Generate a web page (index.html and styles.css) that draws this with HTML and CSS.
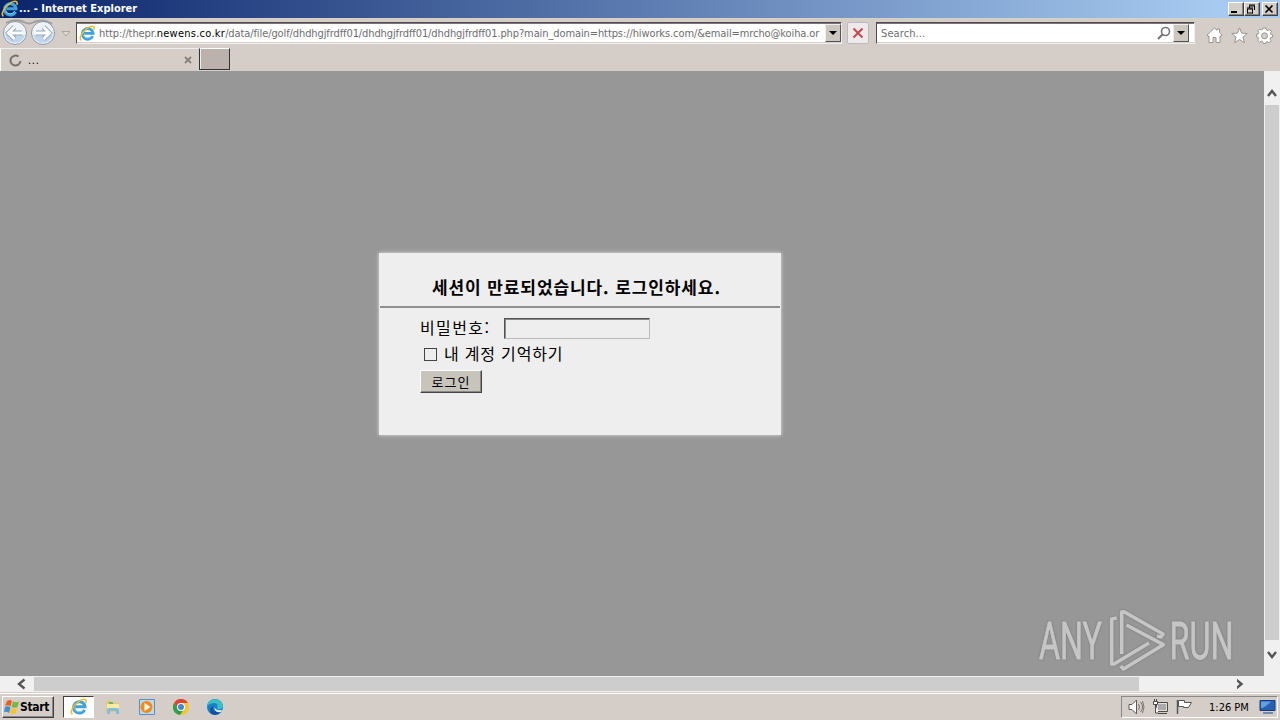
FILE: index.html
```
<!doctype html>
<html lang="ko">
<head>
	<meta charset="utf-8">
	<title>... - Internet Explorer</title>
	<link rel="stylesheet" href="styles.css">
</head>
<body>
	<!-- shared icon -->
	<svg class="defs" width="0" height="0">
		<symbol id="ie" viewBox="0 0 18 18">
			<path d="M14.5 11.8A5.7 5.7 0 1 1 15 8.8H5.5" fill="none" stroke="#3fa0dc" stroke-width="3"/>
			<path d="M13.8 10.9A5 5 0 0 1 4.5 10.5" fill="none" stroke="#7fd0f2" stroke-width="1"/>
			<path d="M2.4 16.2C-.5 14.5 3.1 7.5 8.2 3.8C12.8.4 17.4.2 15.8 4.8" fill="none" stroke="#e9bd2e" stroke-width="1.6"/>
		</symbol>
	</svg>

	<div class="titlebar">
		<svg class="title-icon" width="18" height="18"><use href="#ie"/></svg>
		<span class="title-text">... - Internet Explorer</span>
		<div class="winbtns">
			<button class="winbtn"><svg width="12" height="10"><path d="M2 8h6" stroke="#000" stroke-width="2"/></svg></button>
			<button class="winbtn"><svg width="12" height="10"><path d="M4 1h6M4 2h6M9.5 2v4M4.5 2v2M2 4h6M2 5h6M7.5 5v4.5M2.5 5v4.5M2 9h6" fill="none" stroke="#000"/></svg></button>
			<button class="winbtn close"><svg width="12" height="10"><path d="M2.5 1.5l7 7M9.500 1.500l-7 7" stroke="#000" stroke-width="1.700"/></svg></button>
		</div>
	</div>

	<div class="toolbar">
		<svg class="nav" width="74" height="30" viewBox="0 0 74 30">
			<path d="M6 5Q15 0 24 4Q29 7 34 4Q44 0 52 6" fill="none" stroke="#a19da1" stroke-width="2"/>
			<circle cx="15" cy="15" r="11.500" fill="#edf3f9" stroke="#8d97a8"/>
			<circle cx="43" cy="15" r="11.500" fill="#edf3f9" stroke="#8d97a8"/>
			<path d="M5 17a10.300 10.300 0 0 0 20 0zM33 17a10.300 10.300 0 0 0 20 0z" fill="#bfd6ea"/>
			<path d="M22 15H9M14.500 9l-6 6l6 6M36 15h13M43.500 9l6 6l-6 6" fill="none" stroke="#93a9c0" stroke-width="5"/>
			<path d="M22 15H9M14.500 9l-6 6l6 6M36 15h13M43.500 9l6 6l-6 6" fill="none" stroke="#fff" stroke-width="3"/>
			<path d="M62 13.500h8l-4 4.500z" fill="#ddd8d4" stroke="#aaa5a2"/>
		</svg>
		<div class="field address">
			<svg width="17" height="17"><use href="#ie"/></svg>
			<span class="url">http://thepr.<b>newens.co.kr</b>/data/file/golf/dhdhgjfrdff01/dhdhgjfrdff01/dhdhgjfrdff01.php?main_domain=https://hiworks.com/&amp;email=mrcho@koiha.or</span>
			<button class="drop"><svg width="8" height="4"><path d="M0 0h8l-4 4z"/></svg></button>
		</div>
		<button class="stop"><svg width="12" height="12"><path d="M1.500 1.500l9 9M10.500 1.500l-9 9" stroke="#c74850" stroke-width="2"/></svg></button>
		<div class="field search">
			<span class="search-text">Search...</span>
			<svg class="lens" width="14" height="14"><circle cx="8.500" cy="5.500" r="4" fill="none" stroke="#77747a" stroke-width="1.600"/><path d="M5.500 8.500L1 13" stroke="#77747a" stroke-width="2.200"/></svg>
			<button class="drop"><svg width="8" height="4"><path d="M0 0h8l-4 4z"/></svg></button>
		</div>
		<div class="tools">
			<svg width="17" height="17" viewBox="0 0 17 17"><path d="M1 8L8.500 1L11 3.300V2h2.500v3.500L16 8l-1 1.500l-1-.7V15.500h-4v-5H7v5H3V8.800l-1 .7z" fill="#fff" stroke="#99948f"/></svg>
			<svg width="17" height="17" viewBox="0 0 17 17"><path d="M8.500.8l2.100 5.300l5.700.4l-4.400 3.600l1.500 5.600l-4.900-3.100l-4.900 3.100l1.500-5.600L.7 6.500l5.700-.4z" fill="#fff" stroke="#99948f"/></svg>
			<svg width="17" height="17" viewBox="0 0 17 17"><path d="M7 1h3l.4 2l1.500.6l1.700-1.100l2 2L14.500 6.200l.6 1.300l1.400.3v2.400l-1.800.4l-.6 1.500l1 1.700l-2 2l-1.700-1.100l-1.300.5L9.800 16.500H7.200l-.5-1.800l-1.400-.5l-1.700 1l-1.900-1.900l1-1.700L2.100 10.200L.5 9.800V7.300l1.700-.4l.6-1.400l-1-1.600l1.900-1.900l1.600 1l1.400-.6z" fill="#fff" stroke="#99948f"/><circle cx="8.500" cy="8.800" r="3" fill="#d5cec8" stroke="#99948f"/></svg>
		</div>
	</div>

	<div class="tabs">
		<div class="tab">
			<svg width="13" height="13"><path d="M9.500 2.500A5 5 0 1 0 11.500 7" fill="none" stroke="#77716e" stroke-width="2"/></svg>
			<span class="tab-text">...</span>
			<svg width="8" height="8"><path d="M1 1l6 6M7 1L1 7" stroke="#85807c" stroke-width="1.800"/></svg>
		</div>
		<div class="newtab"></div>
	</div>

	<div class="view">
		<div class="page">
			<form class="login">
				<h3>세션이 만료되었습니다. 로그인하세요.</h3>
				<div class="fields">
					<div class="row">
						<label for="password" class="pw-label">비밀번호:</label>
						<input type="password" id="password" class="password">
					</div>
					<div class="row remember">
						<input type="checkbox" id="remember" class="check">
						<label for="remember">내 계정 기억하기</label>
					</div>
					<button type="button" class="submit">로그인</button>
				</div>
			</form>
			<div class="watermark">
				<svg width="210" height="64" viewBox="0 0 210 64">
					<g class="wm-text">
						<text x="1" y="51" textLength="63" lengthAdjust="spacingAndGlyphs">ANY</text>
						<text x="131.500" y="51" textLength="64" lengthAdjust="spacingAndGlyphs">RUN</text>
					</g>
					<g fill="none" stroke="#c6c6c6" stroke-width="3.600" stroke-linejoin="round">
						<path d="M78.700 10L73.700 11V56L76 56L111 35"/>
						<path d="M83.700 46V4L86 3.700L125 26L123 29L119 28"/>
						<path d="M88.500 17L125.300 36.700L85.500 61L82.700 58"/>
					</g>
				</svg>
			</div>
		</div>
		<div class="vscroll">
			<svg width="16" height="34"><path d="M4 25l4-5l4 5" fill="none" stroke="#555" stroke-width="2.400"/></svg>
			<div class="vthumb"></div>
			<svg width="16" height="36"><path d="M4 12l4 5l4-5" fill="none" stroke="#555" stroke-width="2.400"/></svg>
		</div>
	</div>
	<div class="hscroll">
		<svg width="34" height="16"><path d="M24.500 3.500L19 8l5.500 4.500" fill="none" stroke="#555" stroke-width="2.400"/></svg>
		<div class="hthumb"></div>
		<svg class="right" width="20" height="16"><path d="M3 3.500L8.500 8L3 12.500" fill="none" stroke="#555" stroke-width="2.400"/></svg>
	</div>

	<div class="taskbar">
		<button class="start">
			<svg width="16" height="16" viewBox="0 0 16 16"><path d="M3 2Q6 0 8 2L6.500 7.500Q4 5.500 1 7z" fill="#e96027"/><path d="M9 2.500Q12 4 15 2.500L13.500 8Q10.500 9.500 7.500 7.800z" fill="#75b843"/><path d="M1 8Q4 6.500 6.500 8.500L5 14Q2.500 12 0 13z" fill="#408ed2"/><path d="M7.300 9Q10 10.500 13 9L11.500 14.500Q8.500 16 5.800 14z" fill="#f6c52d"/></svg>
			<span>Start</span>
		</button>
		<div class="task active"><svg width="18" height="18"><use href="#ie"/></svg></div>
		<div class="task">
			<svg width="16" height="16" viewBox="0 0 16 16"><path d="M1 2h5l1 2h7v9H1z" fill="#e8c969"/><path d="M2 5h12v5H2z" fill="#f9eaa8"/><path d="M4 3h4v2H4z" fill="#62b572"/><path d="M2 15v-4q0-2 2-2h8q2 0 2 2v4h-3v-3H5v3z" fill="#82bddb"/></svg>
		</div>
		<div class="task">
			<svg width="16" height="16" viewBox="0 0 16 16"><path d="M.5.5h15v15H.5z" fill="#bcd9ef" stroke="#5790c1"/><circle cx="7.500" cy="8" r="6" fill="#f18a18"/><path d="M5.500 4l6 4l-6 4z" fill="#fff"/></svg>
		</div>
		<div class="task">
			<svg width="16" height="16" viewBox="0 0 16 16"><circle cx="8" cy="8" r="8" fill="#f7c62d"/><path d="M1 4A8 8 0 0 1 15 4H8L5 10z" fill="#db4437"/><path d="M1 4A8 8 0 0 0 7 16L11 10H5z" fill="#2f9e51"/><circle cx="8" cy="8" r="4" fill="#fff"/><circle cx="8" cy="8" r="3" fill="#4285d4"/></svg>
		</div>
		<div class="task">
			<svg width="16" height="16" viewBox="0 0 16 16"><circle cx="8" cy="8" r="8" fill="#1680c8"/><path d="M0 7C1-2 15-2 16 7Q15 11 10 10Q12 4 7 4Q3 4 0 7z" fill="#39bfc4"/><path d="M7 7Q3 13 14 13Q9 18 4 14.500Q1 9 7 7z" fill="#1352a2"/><path d="M8 7q-1 5 7 4l-1 2q-8 1-6-6z" fill="#e7edf0"/></svg>
		</div>
		<div class="tray">
			<svg width="17" height="16" viewBox="0 0 17 16"><path d="M1 5.500h3L8.500 1v14L4 10.500H1z" fill="#fff" stroke="#5c5955"/><path d="M10.500 5q2 3 0 6M12.500 3q4 5 0 10M14.500 2q3 6 0 12" fill="none" stroke="#77736e"/></svg>
			<svg class="net" width="17" height="16" viewBox="0 0 17 16"><path d="M4.500 3.500h11v9h-11zM6 14.500h9" fill="#e5e2dd" stroke="#4b4845"/><path d="M6 5h8v6H6z" fill="#aaa"/><path d="M1.500 2.500h4v3h-4zM2.500 0v2M4.500 0v2M3.500 6v8h3" fill="#fff" stroke="#4b4845"/></svg>
			<svg class="flag" width="17" height="16" viewBox="0 0 17 16"><path d="M1.500 1v14" stroke="#555" stroke-width="1.500"/><path d="M2.500 1.500h6v2h7l-3 5h-5v-1h-5z" fill="#fff" stroke="#555"/></svg>
			<span class="clock">1:26 PM</span>
			<svg width="17" height="14" viewBox="0 0 17 14"><path d="M1 .5h15v10H1z" fill="#2860b4" stroke="#173c7b"/><path d="M2 1.500h10Q6 8 2 8z" fill="#62a0de"/><path d="M4 13h10" stroke="#4974ac" stroke-width="1.500"/></svg>
		</div>
	</div>
</body>
</html>
```
FILE: styles.css
```
* {
	box-sizing: border-box;
}
body {
	margin: 0;
	width: 1280px;
	height: 720px;
	overflow: hidden;
	background: #d5cec8;
	font: 11px "DejaVu Sans Condensed", "DejaVu Sans", sans-serif;
	font-stretch: condensed;
}
button {
	padding: 0;
	font-family: inherit;
}
svg {
	display: block;
	flex: none;
}
.defs {
	display: none;
}
.titlebar {
	display: flex;
	height: 18px;
	background: linear-gradient(to right, #0a246a, #a6caf0 95%);
	color: #fff;
	font-weight: bold;
}
.title-icon {
	margin-left: 1px;
}
.title-text {
	line-height: 18px;
	white-space: nowrap;
}
.winbtns {
	display: flex;
	margin: 2px 2px 0 auto;
}
.winbtn {
	width: 16px;
	height: 14px;
	background: #d5cec8;
	border: 1px solid;
	border-color: #fff #404040 #404040 #fff;
	box-shadow: inset -1px -1px #888;
}
.close {
	margin-left: 2px;
}

/* address row */
.toolbar {
	display: flex;
	height: 30px;
	border-top: 1px solid #d5d2c1;
}
.nav {
	margin-top: -1px;
}
.field {
	display: flex;
	align-items: center;
	height: 22px;
	margin-top: 3px;
	background: #fff;
	border: 1px solid;
	border-color: #55494f #eee #eee #55494f;
	box-shadow: inset 0 1px #777, inset 0 -1px #d8cdc9;
	color: #6d6d70;
}
.address {
	width: 766px;
	margin-left: 2px;
	padding: 0 0 0 2px;
}
.url {
	width: 724px;
	margin-left: 3px;
	white-space: nowrap;
	letter-spacing: -0.1px;
}
.url b {
	color: #000;
	font-weight: normal;
	letter-spacing: 0.25px;
}
.drop {
	display: flex;
	align-items: center;
	justify-content: center;
	flex: none;
	width: 16px;
	height: 18px;
	margin-left: auto;
	background: #cbc7bf;
	border: 1px solid;
	border-color: #eee #555 #555 #eee;
}
.stop {
	display: flex;
	align-items: center;
	justify-content: center;
	width: 22px;
	height: 22px;
	margin: 3px 0 0 5px;
	background: #eeeae9;
	border: 1px solid #bbb9c2;
	border-radius: 2px;
}
.search {
	width: 319px;
	margin-left: 7px;
	padding: 0 5px 0 4px;
}
.search-text {
	letter-spacing: 0.1px;
}
.lens {
	margin-left: auto;
}
.search .drop {
	margin-left: 2px;
}
.tools {
	display: flex;
	gap: 8px;
	margin: 8px 0 0 11px;
}

.tabs {
	display: flex;
	height: 23px;
}
.tab {
	display: flex;
	align-items: center;
	width: 198px;
	padding: 0 6px 0 8px;
	border-left: 1px solid #fff;
	border-top: 1px solid #eee;
}
.tab-text {
	flex: 1;
	margin-left: 6px;
	color: #000;
	letter-spacing: 0.7px;
}
.newtab {
	width: 31px;
	height: 22px;
	margin-left: 1px;
	background: #bbb2ad;
	border: 1px solid #333;
	border-top-color: #fff;
	box-shadow: inset 1px 0 #eee;
}

/* document */
.view {
	display: flex;
	height: 605px;
}
.page {
	position: relative;
	width: 1264px;
	padding: 182px 0 0 379px;
	background: #979797;
}
.login {
	width: 402px;
	height: 182px;
	padding: 0 1px;
	background: #eee;
	box-shadow: 0 0 4px #ddd;
	font: 16px "Noto Sans CJK KR", sans-serif;
	color: #000;
}
.login h3 {
	height: 55px;
	margin: 0;
	padding: 21px 0 0 52px;
	border-bottom: 2px solid #909090;
	font-size: 17px;
	line-height: 25px;
	white-space: nowrap;
	letter-spacing: 0.9px;
}
.fields {
	padding: 8px 0 0 40px;
}
.row {
	display: flex;
	align-items: center;
	height: 24px;
}
.row label {
	white-space: nowrap;
	line-height: 22px;
	padding-bottom: 2px;
	letter-spacing: 0.8px;
}
.row .pw-label {
	width: 84px;
	letter-spacing: 1.4px;
}
.password {
	width: 146px;
	height: 21px;
	background: #eee;
	border: 1px solid;
	border-color: #555 #bbb #bbb #555;
	box-shadow: inset 1px 1px #888;
}
.remember {
	margin-top: 2px;
}
.check {
	appearance: none;
	width: 13px;
	height: 13px;
	margin: 0 7px 0 4px;
	border: 1px solid #444;
}
.submit {
	display: block;
	width: 62px;
	height: 23px;
	margin-top: 4px;
	background: #c7c4bb;
	border: 1px solid;
	border-color: #fff #444 #444 #fff;
	box-shadow: inset -1px -1px #888;
	font: 13px "Noto Sans CJK KR", sans-serif;
	line-height: 20px;
	letter-spacing: 1px;
}
.watermark {
	position: absolute;
	right: 16px;
	bottom: 4px;
	filter: drop-shadow(0 0 1px #777);
}
.watermark svg {
	overflow: visible;
}
.wm-text {
	fill: #c6c6c6;
	stroke: #c6c6c6;
	stroke-width: 0.8px;
	font: 52px "Liberation Sans Narrow", Roboto, sans-serif;
}
.vscroll {
	width: 16px;
	background: #f0f0f0;
}
.vthumb {
	width: 14px;
	height: 535px;
	margin-left: 1px;
	background: #cdcdcd;
}
.hscroll {
	display: flex;
	height: 16px;
	background: #f0f0f0;
}
.hthumb {
	width: 1105px;
	height: 14px;
	margin-top: 1px;
	background: #cdcdcd;
}
.right {
	margin-left: 98px;
}
.right path {
	transform: translateX(-4px);
}

.taskbar {
	display: flex;
	height: 28px;
	padding: 3px 2px 2px;
	border-top: 1px solid #d5cec8;
	box-shadow: inset 0 1px #fff;
}
.start {
	display: flex;
	align-items: center;
	width: 52px;
	height: 22px;
	padding-left: 1px;
	background: #d5cec8;
	border: 1px solid;
	border-color: #fff #404040 #404040 #fff;
	box-shadow: inset -1px -1px #888;
	font-size: 12px;
	font-weight: bold;
	letter-spacing: -0.3px;
}
.task {
	display: flex;
	align-items: center;
	justify-content: center;
	width: 34px;
	height: 22px;
}
.active {
	width: 31px;
	margin: 0 2px 0 9px;
	background: #fff;
	border: 1px solid;
	border-color: #404040 #fff #fff #404040;
}
.tray {
	display: flex;
	align-items: center;
	width: 157px;
	height: 22px;
	margin-left: auto;
	padding: 0 1px 0 6px;
	border: 1px solid;
	border-color: #888 #fff #fff #888;
}
.net {
	margin-left: 7px;
}
.flag {
	margin-left: 7px;
}
.clock {
	width: 51px;
	margin-left: 16px;
	white-space: nowrap;
}
```
